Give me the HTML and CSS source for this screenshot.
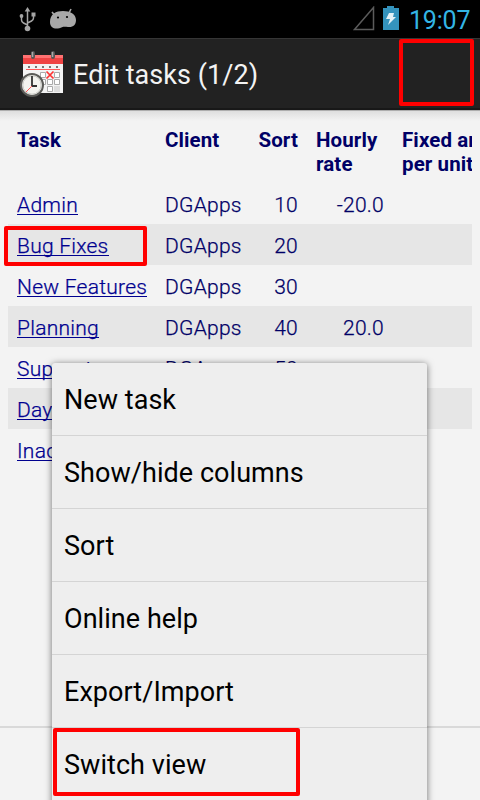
FILE: index.html
```html
<!DOCTYPE html>
<html lang="en">
<head>
<meta charset="utf-8">
<title>Edit tasks</title>
<link rel="stylesheet" href="styles.css">
</head>
<body>
<div class="screen">
  <header class="status">
    <svg class="usb" width="18" height="26" viewBox="0 0 18 26" fill="none" stroke="#a4a4a4" stroke-width="1.5"><path d="M8.5 3v18M2.5 10v3q0 2 2 3l4 2M14.5 8v3q0 2-2 3l-4 2"/><path d="M8.5 0l2.8 4.5H5.7z" fill="#a4a4a4" stroke="none"/><circle cx="8.5" cy="21.5" r="2.8" fill="#a4a4a4" stroke="none"/><circle cx="2.5" cy="9" r="1.9" fill="#a4a4a4" stroke="none"/><path d="M12.5 5.5h4v4h-4z" fill="#a4a4a4" stroke="none"/></svg>
    <svg class="droid" width="28" height="22" viewBox="0 0 28 22"><path d="M3 4l4 5M22 1l-3 6" stroke="#a8a8a8" stroke-width="1.6"/><path d="M1 14C1 6 7 3 14 3s13 3 13 9c0 5-3 7.500-8 7-2 0-4-.5-6 .2C9 21 1 22 1 14z" fill="#a8a8a8"/><circle cx="9" cy="9.500" r="1.1"/><circle cx="18" cy="9" r="1.1"/></svg>
    <svg class="signal" width="22" height="25" viewBox="0 0 22 25"><path d="M1.5 23.5L20.5 1.5v22z" fill="none" stroke="#5b5b5b" stroke-width="1.5"/></svg>
    <svg class="battery" width="16" height="24" viewBox="0 0 16 24"><path d="M0 2h4V0h7v2h5v22H0z" fill="#3493bd"/><path d="M6 7h5l-1 4h3L5 19l2-6H3z" fill="#e4f2f7"/></svg>
    <span class="clock">19:07</span>
  </header>
  <div class="bar">
    <svg class="logo" width="44" height="48" viewBox="0 0 44 48">
      <path d="M3 12h40v30H3z" fill="#f3f3f3"/><path d="M3 4h40v9H3z" fill="#f04444"/><path d="M3 4h40v3H3z" fill="#ff7272"/>
      <path d="M13 2v4M33 2v4" stroke="#555" stroke-width="4" stroke-linecap="round"/><path d="M12.5 1v5M32.500 1v5" stroke="#aaa" stroke-width="1.500"/>
      <path d="M8 16h32" stroke="#777" stroke-width="2" stroke-dasharray="2 5"/><path d="M6 18.500h34" stroke="#ff5a5a"/>
      <path d="M20.500 21.500h5v5h-5zM34.500 21.500h5v5h-5zM20.500 28.500h5v5h-5zM27.500 28.500h5v5h-5zM34.500 28.500h5v5h-5zM27.500 35.500h5v5h-5z" fill="#fff" stroke="#aaa"/><path d="M34 35h6v6h-6z" fill="#ddd"/>
      <path d="M26.500 20.500l7 7M33.500 20.500l-7 7" stroke="#f33" stroke-width="1.700"/>
      <circle cx="12" cy="34" r="11" fill="#f3f3ef" stroke="#5b5b58" stroke-width="2"/><circle cx="12" cy="34" r="9.200" fill="none" stroke="#c8c8c4"/>
      <path d="M12 25v10h5" fill="none" stroke="#333" stroke-width="1.800"/><path d="M12 35l-6 6" stroke="#f55"/>
    </svg>
    <h1 class="title"><span>Edit tasks (1/2)</span></h1>
    <span class="mark mark-action"></span>
  </div>
  <main class="content">
    <div class="table">
      <div class="row head"><span>Task</span><span>Client</span><span class="num">Sort</span><span>Hourly<br>rate</span><span>Fixed amount<br>per unit</span></div>
      <div class="row"><a>Admin</a><span>DGApps</span><span class="num">10</span><span class="num">-20.0</span></div>
      <div class="row alt"><a>Bug Fixes</a><span>DGApps</span><span class="num">20</span><i class="mark mark-task"></i></div>
      <div class="row"><a>New Features</a><span>DGApps</span><span class="num">30</span></div>
      <div class="row alt"><a>Planning</a><span>DGApps</span><span class="num">40</span><span class="num">20.0</span></div>
      <div class="row"><a>Support</a><span>DGApps</span><span class="num">50</span></div>
      <div class="row alt"><a>Day</a></div>
      <div class="row"><a>Inactive</a></div>
    </div>
  </main>
  <footer class="foot"></footer>
  <nav class="menu">
    <div class="item"><span>New task</span></div>
    <div class="item"><span>Show/hide columns</span></div>
    <div class="item"><span>Sort</span></div>
    <div class="item"><span>Online help</span></div>
    <div class="item"><span>Export/Import</span></div>
    <div class="item"><span>Switch view</span><i class="mark mark-view"></i></div>
  </nav>
</div>
</body>
</html>
```
FILE: styles.css
```css
* { box-sizing: border-box; }
body { margin: 0; font-family: Roboto, sans-serif; }
.screen { position: relative; display: flex; flex-direction: column; width: 480px; height: 800px; overflow: hidden; background: #f3f3f3; }
.status { display: flex; align-items: flex-start; height: 38px; padding: 6px 10px 0 19px; background: #000; }
.usb { margin-top: 1px; }
.droid { margin: 2px 0 0 12px; }
.signal { margin-left: auto; }
.battery { margin: 0 10px 0 8px; }
.clock { width: 61px; font-size: 25px; line-height: 29px; letter-spacing: -.2px; color: #33b5e5; white-space: nowrap; }
.bar { position: relative; display: flex; flex: none; height: 72px; padding: 12px 0 0 20px; background: #222; border-top: 1px solid #353535; border-bottom: 2px solid #181818; }
.title { margin: 9px 0 0 9px; font-size: 27px; font-weight: 400; line-height: 30px; letter-spacing: .05px; color: #f3f3f3; }
.content { flex: 1; padding: 0 8px; background: linear-gradient(#adadad 0, #adadad 1px, #dedede 1px, #f3f3f3 11px); }
.table { font-size: 21px; font-weight: 300; line-height: 24px; letter-spacing: .25px; color: #000066; -webkit-text-stroke: .25px; }
.row { position: relative; display: grid; grid-template-columns: 130px 76px 39px 68px 70px; column-gap: 18px; height: 41px; padding: 10px 0 0 9px; white-space: nowrap; }
.head { height: 73px; padding-top: 18px; overflow: hidden; font-size: 20.5px; font-weight: 700; letter-spacing: .1px; -webkit-text-stroke: 0; }
.alt { background: #e6e6e6; }
.row a { justify-self: start; height: 22px; border-bottom: 1px solid #00008f; color: #00008f; }
.num { justify-self: end; }
.foot { height: 74px; border-top: 2px solid #d9d9d9; }
.menu { position: absolute; left: 52px; top: 363px; width: 375px; height: 445px; border-radius: 3px; background: #eee; box-shadow: 0 1px 7px rgba(0,0,0,.55); }
.item { position: relative; height: 73px; padding: 22px 12px 0; border-bottom: 1px solid #d4d4d4; font-size: 27px; line-height: 31px; letter-spacing: .05px; color: #000; }
.mark { position: absolute; border: 4px solid #f00; border-radius: 2px; }
.mark-action { left: 399px; top: 0; width: 75px; height: 67px; }
.mark-task { left: -4px; top: 2px; width: 143px; height: 40px; }
.mark-view { left: 1px; top: 0; width: 247px; height: 68px; }
```
